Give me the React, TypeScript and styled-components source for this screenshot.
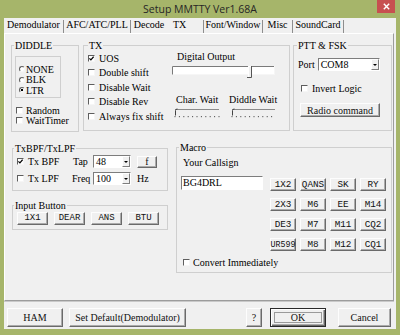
import React from "react";
import styled, { createGlobalStyle } from "styled-components";

const serif = `"Liberation Serif", "Times New Roman", serif`;
const mono = `"Liberation Mono", "Courier New", monospace`;
const FRAME = "#a6b56a";
const FACE = "#f0f0f0";

const Global = createGlobalStyle`
  html, body { margin: 0; padding: 0; background: ${FRAME}; }
  #root { width: 400px; height: 335px; }
`;

const Window = styled.div`
  box-sizing: border-box;
  width: 400px;
  height: 335px;
  background: ${FRAME};
  padding: 0 4px 6px 4px;
  display: flex;
  flex-direction: column;
  font-family: ${serif};
  font-size: 10px;
  color: #000;
`;

const TitleBar = styled.div`
  height: 18px;
  flex-shrink: 0;
  display: grid;
  grid-template-columns: 1fr auto 1fr;
  align-items: start;
`;

const TitleText = styled.div`
  grid-column: 2;
  font-family: "Open Sans", "Noto Sans", sans-serif;
  font-size: 10.5px;
  line-height: 18px;
  color: #262626;
  white-space: nowrap;
`;

const CloseBtn = styled.div`
  grid-column: 3;
  justify-self: end;
  margin-right: 1px;
  width: 18px;
  height: 13px;
  background: #c75050;
  display: flex;
  align-items: center;
  justify-content: center;
`;

const Client = styled.div`
  flex: 1;
  background: ${FACE};
  display: flex;
  flex-direction: column;
`;

const TabRow = styled.div`
  height: 15px;
  flex-shrink: 0;
  display: flex;
  align-items: flex-end;
`;

const Tab = styled.div<{ w: number; sel?: boolean; sep?: boolean }>`
  box-sizing: border-box;
  width: ${(p) => p.w}px;
  height: 13px;
  border-right: 1px solid ${(p) => (p.sep ? "#8e8e8e" : "transparent")};
  display: flex;
  align-items: flex-start;
  justify-content: ${(p) => (p.sel ? "flex-start" : "center")};
  padding-left: ${(p) => (p.sel ? 5 : 0)}px;
  line-height: 10px;
  white-space: nowrap;
`;

const Page = styled.div`
  box-sizing: border-box;
  height: 268px;
  flex-shrink: 0;
  margin-right: 2px;
  border: 1px solid;
  border-color: #ffffff #9c9c9c #9c9c9c #ffffff;
  box-shadow: 0 1px 0 #c9c9c9;
  padding: 11px 0 0 6px;
  display: flex;
  flex-direction: column;
`;

const Row = styled.div<{ mt?: number }>`
  display: flex;
  align-items: flex-start;
  margin-top: ${(p) => p.mt || 0}px;
`;

const Column = styled.div<{ ml?: number }>`
  display: flex;
  flex-direction: column;
  margin-left: ${(p) => p.ml || 0}px;
`;

const Group = styled.div<{ w: number; h: number; ml?: number; mt?: number }>`
  box-sizing: border-box;
  width: ${(p) => p.w}px;
  height: ${(p) => p.h}px;
  margin-left: ${(p) => p.ml || 0}px;
  margin-top: ${(p) => p.mt || 0}px;
  border: 1px solid #cfcfcf;
  display: flex;
  flex-direction: column;
  flex-shrink: 0;
`;

const Legend = styled.div<{ ml: number }>`
  align-self: flex-start;
  margin: -6px 0 0 ${(p) => p.ml}px;
  padding: 0 1px;
  background: ${FACE};
  height: 11px;
  line-height: 11px;
  white-space: nowrap;
`;

const Label = styled.div<{ ml?: number; mt?: number; lh?: number }>`
  margin-left: ${(p) => p.ml || 0}px;
  margin-top: ${(p) => p.mt || 0}px;
  line-height: ${(p) => p.lh || 11}px;
  height: ${(p) => p.lh || 11}px;
  white-space: nowrap;
`;

const CheckRow = styled.div<{ h: number; ml?: number; mt?: number; gap?: number }>`
  display: flex;
  align-items: center;
  height: ${(p) => p.h}px;
  margin-left: ${(p) => p.ml || 0}px;
  margin-top: ${(p) => p.mt || 0}px;
  gap: ${(p) => (p.gap === undefined ? 4 : p.gap)}px;
  line-height: 11px;
  white-space: nowrap;
`;

const Box = styled.span`
  box-sizing: border-box;
  width: 7px;
  height: 7px;
  flex-shrink: 0;
  background: #fff;
  border: 1px solid;
  border-color: #5e5e5e #f6f6f6 #f6f6f6 #5e5e5e;
  display: flex;
  align-items: center;
  justify-content: center;
`;

const RadioDot = styled.span<{ on?: boolean }>`
  box-sizing: border-box;
  width: 6px;
  height: 6px;
  flex-shrink: 0;
  border-radius: 50%;
  border: 1px solid;
  border-color: #5e5e5e #f6f6f6 #f6f6f6 #5e5e5e;
  background: ${(p) =>
    p.on ? "radial-gradient(circle, #000 0 1.1px, #fff 1.6px)" : "#fff"};
`;

const RadioBox = styled.div`
  box-sizing: border-box;
  width: 46px;
  height: 42px;
  margin: 5px 0 0 3px;
  border: 1px solid #cfcfcf;
  padding: 7px 0 0 3px;
  display: flex;
  flex-direction: column;
`;

const Combo = styled.div<{ w: number }>`
  box-sizing: border-box;
  width: ${(p) => p.w}px;
  height: 13px;
  flex-shrink: 0;
  display: flex;
  background: #fff;
  border: 1px solid;
  border-color: #7d7d7d #ffffff #ffffff #7d7d7d;
`;

const ComboText = styled.span`
  flex: 1;
  padding-left: 2px;
  line-height: 11px;
  white-space: nowrap;
`;

const ComboArrow = styled.span`
  box-sizing: border-box;
  width: 8px;
  height: 11px;
  background: ${FACE};
  border: 1px solid;
  border-color: #ffffff #7d7d7d #7d7d7d #ffffff;
  display: flex;
  align-items: center;
  justify-content: center;
  &::after {
    content: "";
    border-left: 2px solid transparent;
    border-right: 2px solid transparent;
    border-top: 2px solid #000;
  }
`;

const Btn = styled.button<{ w: number; h: number; mono?: boolean; fs?: number; ml?: number }>`
  box-sizing: border-box;
  width: ${(p) => p.w}px;
  height: ${(p) => p.h}px;
  flex-shrink: 0;
  margin: 0 0 0 ${(p) => p.ml || 0}px;
  padding: 0;
  background: ${FACE};
  border: 1px solid;
  border-color: #fdfdfd #6a6a6a #6a6a6a #fdfdfd;
  box-shadow: inset -1px -1px #ababab;
  display: flex;
  align-items: center;
  justify-content: center;
  font-family: ${(p) => (p.mono ? mono : serif)};
  font-size: ${(p) => p.fs || 10}px;
  line-height: 11px;
  color: #111;
  white-space: nowrap;
  overflow: visible;
`;

const DefaultBtn = styled(Btn)`
  position: relative;
  border-color: #2a2a2a;
  box-shadow: inset 1px 1px #fff, inset -1px -1px #6a6a6a, inset -2px -2px #ababab;
  &::after {
    content: "";
    position: absolute;
    inset: 3px;
    border: 1px solid #9a9a9a;
  }
`;

const TxBody = styled.div`
  display: flex;
  flex: 1;
`;

const TxChecks = styled.div`
  box-sizing: border-box;
  width: 88px;
  padding-left: 4px;
  display: flex;
  flex-direction: column;
`;

const TxRight = styled.div`
  display: flex;
  flex-direction: column;
`;

const WaitGrid = styled.div`
  display: grid;
  grid-template-columns: 57px 50px;
  grid-template-rows: 12px 10px;
  row-gap: 2px;
  margin-top: 16px;
`;

const SliderSlot = styled.div<{ ml?: number }>`
  margin-left: ${(p) => p.ml || 0}px;
  display: flex;
`;

const PortRow = styled.div`
  display: flex;
  align-items: center;
  gap: 3px;
  height: 13px;
  margin: 7px 0 0 4px;
`;

const FilterGrid = styled.div`
  display: grid;
  grid-template-columns: 55px 21px 38px 26px;
  grid-auto-rows: 13px;
  row-gap: 4px;
  align-items: center;
  margin: 1px 0 0 4px;
`;

const Cell = styled.div<{ ml?: number }>`
  margin-left: ${(p) => p.ml || 0}px;
  display: flex;
  align-items: center;
  line-height: 11px;
`;

const InputRow = styled.div`
  display: grid;
  grid-template-columns: repeat(4, 31px);
  column-gap: 6px;
  margin: 1px 0 0 4px;
`;

const MacroRow = styled.div`
  display: flex;
  align-items: flex-start;
  margin: 7px 0 0 4px;
`;

const CallInput = styled.div`
  box-sizing: border-box;
  width: 82px;
  height: 14px;
  background: #fff;
  border: 1px solid;
  border-color: #7d7d7d #ffffff #ffffff #7d7d7d;
  padding-left: 1px;
  line-height: 12px;
`;

const MacroGrid = styled.div`
  display: grid;
  grid-template-columns: repeat(4, 26px);
  grid-auto-rows: 13px;
  column-gap: 4px;
  row-gap: 7px;
  margin: 2px 0 0 7px;
`;

const BottomBar = styled.div`
  box-sizing: border-box;
  height: 28px;
  flex-shrink: 0;
  display: flex;
  align-items: flex-start;
  padding: 7px 5px 0 3px;
`;

const Spacer = styled.div`
  flex: 1;
`;

function Check({ checked }: { checked?: boolean }) {
  return (
    <Box>
      {checked && (
        <svg width="5" height="5" viewBox="0 0 5 5">
          <path d="M0.4 2.3 L1.9 3.9 L4.6 0.7" stroke="#000" strokeWidth="1.2" fill="none" />
        </svg>
      )}
    </Box>
  );
}

function DigitalSlider() {
  return (
    <svg width="103" height="12" viewBox="0 0 103 12">
      <rect x="0" y="0" width="103" height="9" fill="#fff" />
      <path d="M0.5 9 V0.5 H103" stroke="#7a7a7a" fill="none" />
      <path d="M0.5 8.5 H103 M102.5 0 V9" stroke="#f6f6f6" fill="none" />
      <rect x="76" y="0" width="4" height="12" fill={FACE} />
      <path d="M76.5 11 V0.5 H79" stroke="#fff" fill="none" />
      <path d="M79.5 0 V11.5 H75" stroke="#555" fill="none" />
    </svg>
  );
}

function WaitSlider({ w }: { w: number }) {
  const ticks = [];
  for (let x = 1.5; x < w - 1; x += 4.4) ticks.push(x);
  return (
    <svg width={w} height="10" viewBox={`0 0 ${w} 10`}>
      <path d={`M2 1.5 H${w - 1}`} stroke="#8a8a8a" fill="none" />
      <path d="M2.5 7.5 V2.5 Q2.5 1 4.5 1" stroke="#444" fill="none" />
      {ticks.map((x) => (
        <rect key={x} x={x} y="8" width="1" height="1.2" fill="#555" />
      ))}
    </svg>
  );
}

const tabs: { label: string; w: number; sel?: boolean; sep?: boolean }[] = [
  { label: "Demodulator", w: 60, sep: true },
  { label: "AFC/ATC/PLL", w: 67, sep: true },
  { label: "Decode", w: 37 },
  { label: "TX", w: 36, sel: true, sep: true },
  { label: "Font/Window", w: 59, sep: true },
  { label: "Misc", w: 30, sep: true },
  { label: "SoundCard", w: 51, sep: true },
];

const macros = [
  ["1X2", "QANS", "SK", "RY"],
  ["2X3", "M6", "EE", "M14"],
  ["DE3", "M7", "M11", "CQ2"],
  ["UR599", "M8", "M12", "CQ1"],
];

export default function App() {
  return (
    <>
      <Global />
      <Window>
        <TitleBar>
          <TitleText>Setup MMTTY Ver1.68A</TitleText>
          <CloseBtn>
            <svg width="7" height="7" viewBox="0 0 7 7">
              <path d="M0.8 0.8 L6.2 6.2 M6.2 0.8 L0.8 6.2" stroke="#fff" strokeWidth="1.4" />
            </svg>
          </CloseBtn>
        </TitleBar>
        <Client>
          <TabRow>
            {tabs.map((t) => (
              <Tab key={t.label} w={t.w} sel={t.sel} sep={t.sep}>
                {t.label}
              </Tab>
            ))}
          </TabRow>
          <Page>
            <Row>
              <Group w={68} h={87}>
                <Legend ml={2}>DIDDLE</Legend>
                <RadioBox>
                  {["NONE", "BLK", "LTR"].map((r) => (
                    <CheckRow key={r} h={10.5} gap={1}>
                      <RadioDot on={r === "LTR"} />
                      {r}
                    </CheckRow>
                  ))}
                </RadioBox>
                <CheckRow h={10} ml={4} mt={7} gap={3}>
                  <Check />
                  Random
                </CheckRow>
                <CheckRow h={10} ml={4} gap={3}>
                  <Check />
                  WaitTimer
                </CheckRow>
              </Group>
              <Group w={207} h={86} ml={4}>
                <Legend ml={4}>TX</Legend>
                <TxBody>
                  <TxChecks>
                    <CheckRow h={14.5} gap={4}>
                      <Check checked />
                      UOS
                    </CheckRow>
                    <CheckRow h={14.5} gap={4}>
                      <Check />
                      Double shift
                    </CheckRow>
                    <CheckRow h={14.5} gap={4}>
                      <Check />
                      Disable Wait
                    </CheckRow>
                    <CheckRow h={14.5} gap={4}>
                      <Check />
                      Disable Rev
                    </CheckRow>
                    <CheckRow h={14.5} gap={4}>
                      <Check />
                      Always fix shift
                    </CheckRow>
                  </TxChecks>
                  <TxRight>
                    <Label ml={5} lh={12}>
                      Digital Output
                    </Label>
                    <SliderSlot style={{ marginTop: 3 }}>
                      <DigitalSlider />
                    </SliderSlot>
                    <WaitGrid>
                      <Label ml={4} lh={12}>
                        Char. Wait
                      </Label>
                      <Label lh={12}>Diddle Wait</Label>
                      <SliderSlot ml={1}>
                        <WaitSlider w={47} />
                      </SliderSlot>
                      <SliderSlot ml={1}>
                        <WaitSlider w={46} />
                      </SliderSlot>
                    </WaitGrid>
                  </TxRight>
                </TxBody>
              </Group>
              <Group w={99} h={86} ml={3}>
                <Legend ml={3}>PTT &amp; FSK</Legend>
                <PortRow>
                  <span>Port</span>
                  <Combo w={62}>
                    <ComboText>COM8</ComboText>
                    <ComboArrow />
                  </Combo>
                </PortRow>
                <CheckRow h={12} ml={7} mt={11} gap={4}>
                  <Check />
                  Invert Logic
                </CheckRow>
                <Btn w={80} h={14} ml={6} style={{ marginTop: 9 }}>
                  Radio command
                </Btn>
              </Group>
            </Row>
            <Row mt={15}>
              <Column ml={1}>
                <Group w={156} h={43} mt={1}>
                  <Legend ml={1}>TxBPF/TxLPF</Legend>
                  <FilterGrid>
                    <CheckRow h={13} gap={4}>
                      <Check checked />
                      Tx BPF
                    </CheckRow>
                    <Cell ml={1}>Tap</Cell>
                    <Combo w={38}>
                      <ComboText>48</ComboText>
                      <ComboArrow />
                    </Combo>
                    <Cell ml={6}>
                      <Btn w={20} h={12}>
                        f
                      </Btn>
                    </Cell>
                    <CheckRow h={13} gap={4}>
                      <Check />
                      Tx LPF
                    </CheckRow>
                    <Cell>Freq</Cell>
                    <Combo w={38}>
                      <ComboText>100</ComboText>
                      <ComboArrow />
                    </Combo>
                    <Cell ml={6}>Hz</Cell>
                  </FilterGrid>
                </Group>
                <Group w={156} h={25} mt={14}>
                  <Legend ml={1}>Input Button</Legend>
                  <InputRow>
                    {["1X1", "DEAR", "ANS", "BTU"].map((b) => (
                      <Btn key={b} w={31} h={13} mono fs={9}>
                        {b}
                      </Btn>
                    ))}
                  </InputRow>
                </Group>
              </Column>
              <Group w={216} h={126} ml={8}>
                <Legend ml={2}>Macro</Legend>
                <Label ml={6} mt={4} lh={12}>
                  Your Callsign
                </Label>
                <MacroRow>
                  <CallInput>BG4DRL</CallInput>
                  <MacroGrid>
                    {macros.flat().map((m) => (
                      <Btn key={m} w={26} h={13} mono fs={m.length > 4 ? 8.3 : 9.3}>
                        {m}
                      </Btn>
                    ))}
                  </MacroGrid>
                </MacroRow>
                <CheckRow h={12} ml={6} mt={5} gap={3}>
                  <Check />
                  Convert Immediately
                </CheckRow>
              </Group>
            </Row>
          </Page>
          <BottomBar>
            <Btn w={56} h={19}>
              HAM
            </Btn>
            <Btn w={117} h={19} ml={6}>
              Set Default(Demodulator)
            </Btn>
            <Spacer />
            <Btn w={16} h={19}>
              ?
            </Btn>
            <DefaultBtn w={56} h={19} ml={8}>
              OK
            </DefaultBtn>
            <Btn w={53} h={19} ml={12}>
              Cancel
            </Btn>
          </BottomBar>
        </Client>
      </Window>
    </>
  );
}
